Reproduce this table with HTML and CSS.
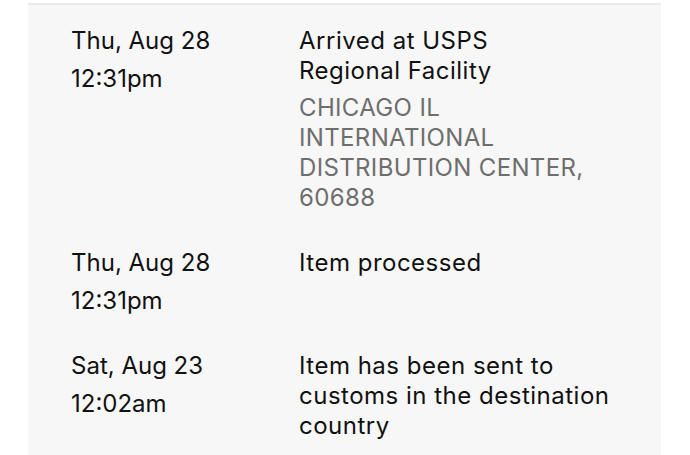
FILE: index.html
```html
<!DOCTYPE html>
<html>
<head>
<meta charset="utf-8">
<link rel="stylesheet" href="styles.css">
</head>
<body>
<div class="panel">
  <div class="event">
    <div class="when">
      <div class="date">Thu, Aug 28</div>
      <div class="time">12:31pm</div>
    </div>
    <div class="what">
      <div class="status">Arrived at USPS<br>Regional Facility</div>
      <div class="place">CHICAGO IL INTERNATIONAL DISTRIBUTION CENTER, 60688</div>
    </div>
  </div>
  <div class="event">
    <div class="when">
      <div class="date">Thu, Aug 28</div>
      <div class="time">12:31pm</div>
    </div>
    <div class="what">
      <div class="status">Item processed</div>
    </div>
  </div>
  <div class="event">
    <div class="when">
      <div class="date">Sat, Aug 23</div>
      <div class="time">12:02am</div>
    </div>
    <div class="what">
      <div class="status">Item has been sent to customs in the destination country</div>
    </div>
  </div>
</div>
</body>
</html>
```
FILE: styles.css
```css
html, body {
  margin: 0;
  padding: 0;
  background: #ffffff;
}
body {
  padding-top: 3px;
  font-family: Inter, "Noto Sans", sans-serif;
  font-size: 24px;
  line-height: 30px;
  color: #111111;
  height: 452px;
  overflow: hidden;
}
.panel {
  margin-left: 28px;
  width: 633px;
  min-height: 460px;
  background: #f7f7f7;
  border-top: 2px solid #e9e9e9;
  padding-top: 21px;
  box-sizing: border-box;
}
.event {
  display: flex;
  padding-left: 43px;
  padding-bottom: 35px;
}
.when {
  width: 228px;
  flex: none;
}
.time {
  margin-top: 8px;
}
.what {
  width: 330px;
}
.status {
  letter-spacing: 0.5px;
}
.place {
  margin-top: 7px;
  letter-spacing: 0.35px;
  color: #6e6e6e;
}
```
